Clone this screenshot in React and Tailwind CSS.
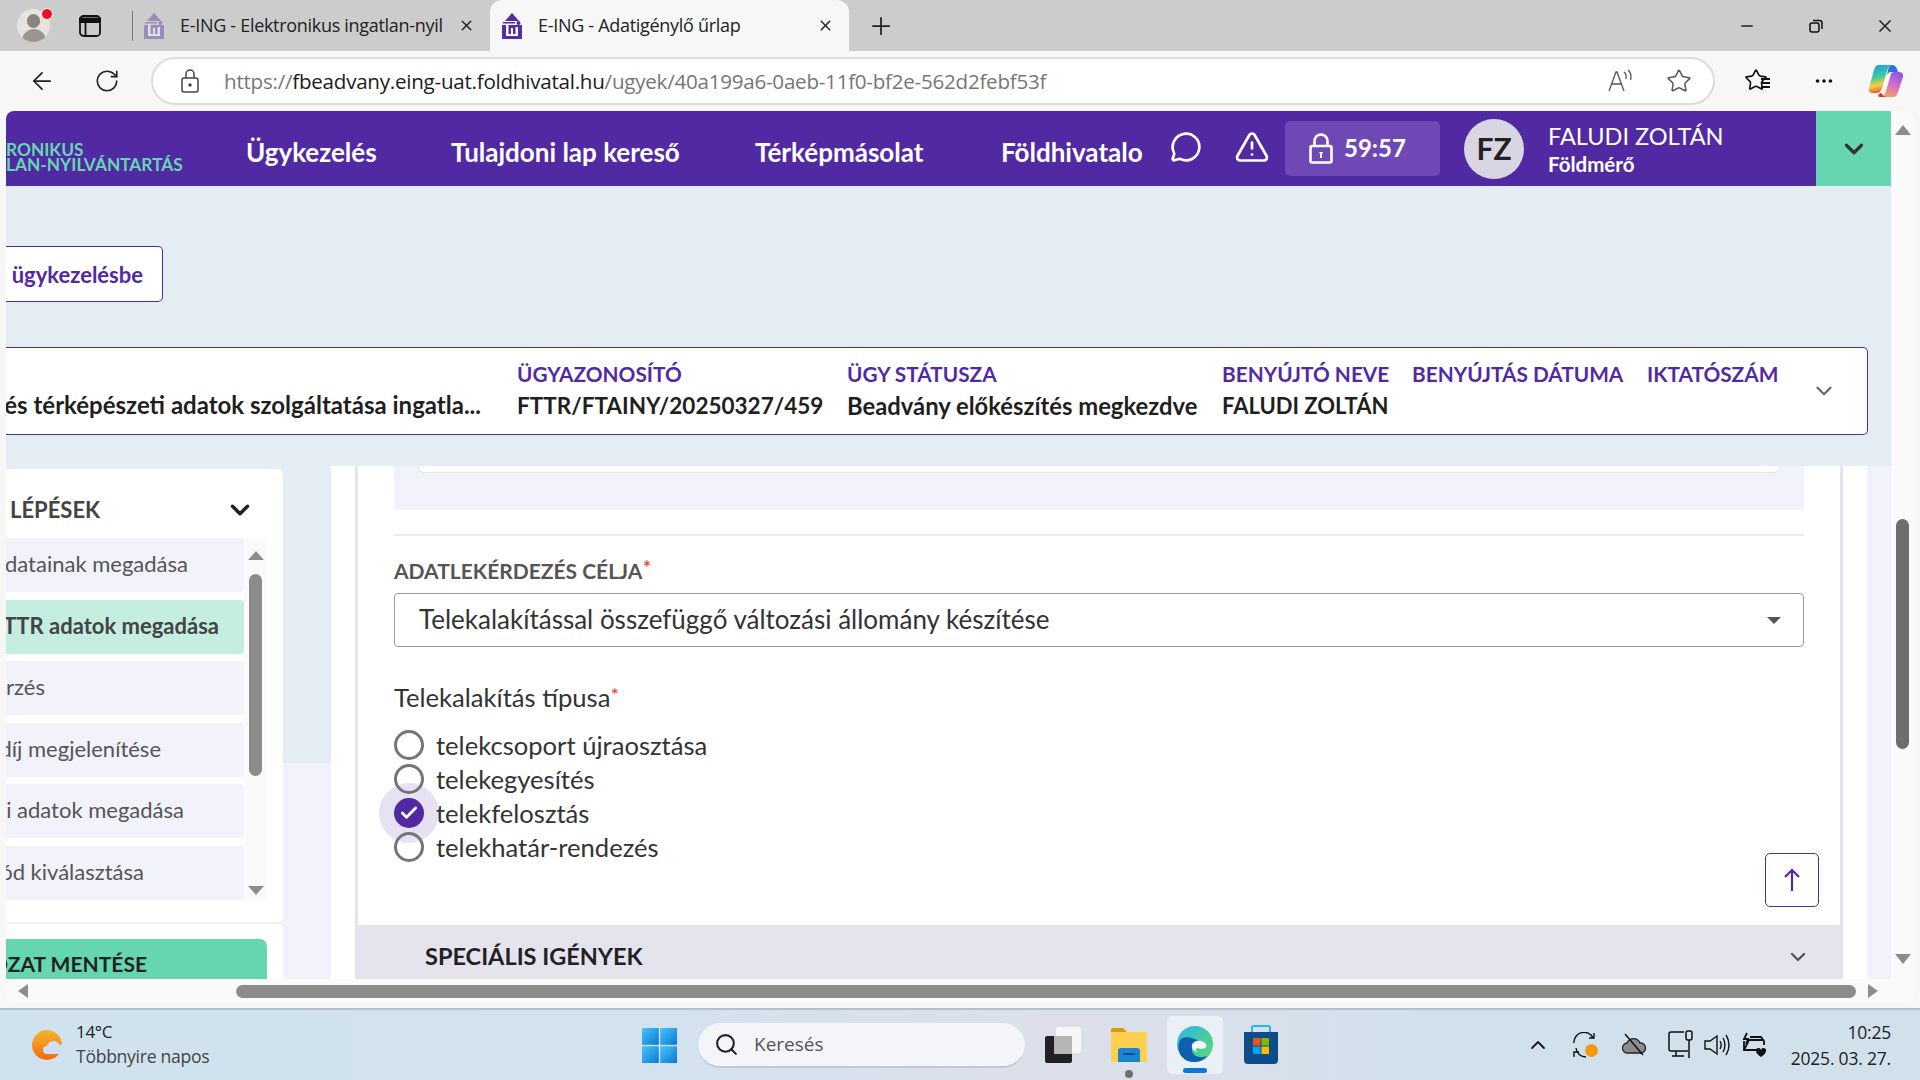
import React from "react";
import {
  ArrowLeft,
  Check,
  ChevronDown,
  ChevronUp,
  Ellipsis,
  MessageCircle,
  Minus,
  Plus,
  RotateCw,
  Search,
  Star,
  TriangleAlert,
  X,
} from "lucide-react";

const steps = [
  { text: "datainak megadása", pr: "pr-[56px]" },
  { text: "TTR adatok megadása", pr: "pr-[25px]", active: true },
  { text: "rzés", pr: "pr-[199px]" },
  { text: "díj megjelenítése", pr: "pr-[83px]" },
  { text: "i adatok megadása", pr: "pr-[60px]" },
  { text: "ód kiválasztása", pr: "pr-[100px]" },
];

const radios = ["telekcsoport újraosztása", "telekegyesítés", "telekfelosztás", "telekhatár-rendezés"];

function Favicon({ faded }) {
  return (
    <svg width="22" height="26" viewBox="0 0 22 26" className={faded ? "opacity-40" : ""}>
      <path d="M11 0 L18 8 L4 8 Z M2 9 H14 V10.500 H2 Z" fill="#512da8" />
      <circle cx="17.500" cy="10" r="2" fill="#512da8" />
      <path d="M1 12 H21 V26 H1 Z" fill="#512da8" />
      <path d="M5 12 H7.500 V21 H10 V15 H12 V21 H14.500 V14 H17 V23 H5 Z" fill="#fff" />
    </svg>
  );
}

function Profile() {
  return (
    <div className="relative w-[33px] h-[33px] rounded-full bg-[#e6e3df] overflow-hidden shrink-0">
      <div className="mx-auto mt-[5px] w-[13px] h-[14px] rounded-full bg-[#8a8580]" />
      <div className="mx-auto mt-[1px] w-[24px] h-[14px] rounded-t-full bg-[#9a9590]" />
    </div>
  );
}

function TabBar() {
  return (
    <div className="h-[51px] bg-[#cccccc] flex items-end shrink-0 text-[#222]">
      <div className="w-[133px] h-[51px] flex items-center pl-[17px] relative">
        <Profile />
        <span className="absolute left-[41px] top-[8px] w-[12px] h-[12px] rounded-full bg-[#e81123] border border-white" />
        <svg width="22" height="22" viewBox="0 0 22 22" className="ml-[29px]" fill="none" stroke="#111" strokeWidth="1.800">
          <rect x="1" y="1" width="20" height="20" rx="3.500" />
          <path d="M1 3.500h20V7H1z" fill="#111" />
          <path d="M6.500 7v14" />
        </svg>
        <div className="absolute right-0 top-[11px] h-[30px] w-px bg-[#777]" />
      </div>
      <div className="w-[357px] h-[51px] flex items-center pl-[10px] pr-[10px]">
        <Favicon faded />
        <span className="ml-[15px] w-[263px] overflow-hidden whitespace-nowrap text-[18px] font-['Open_Sans',sans-serif] tracking-[-0.3px]">
          E-ING - Elektronikus ingatlan-nyilvántartás
        </span>
        <X size={17} className="ml-[15px]" />
      </div>
      <div className="w-[359px] h-[51px] bg-[#f7f7f7] rounded-t-[12px] flex items-center pl-[11px]">
        <Favicon />
        <span className="ml-[15px] w-[279px] whitespace-nowrap text-[18px] font-['Open_Sans',sans-serif] tracking-[-0.3px]">
          E-ING - Adatigénylő űrlap
        </span>
        <X size={17} />
      </div>
      <div className="h-[51px] flex items-center ml-[18px]">
        <Plus size={28} strokeWidth={1.5} />
      </div>
      <div className="ml-auto h-[51px] flex items-center">
        <div className="w-[70px] flex justify-center"><Minus size={18} /></div>
        <div className="w-[68px] flex justify-center">
          <svg width="16" height="16" viewBox="0 0 16 16" fill="none" stroke="#111" strokeWidth="1.500">
            <rect x="2" y="5" width="9" height="9" rx="2" />
            <path d="M5 2.500h6.500a2.500 2.500 0 0 1 2.500 2.500v6" />
          </svg>
        </div>
        <div className="w-[70px] flex justify-center"><X size={20} /></div>
      </div>
    </div>
  );
}

function CopilotIcon() {
  return (
    <svg width="36" height="34" viewBox="0 0 36 34">
      <defs>
        <linearGradient id="cpA" x1="0.1" y1="0" x2="0.3" y2="1">
          <stop offset="0" stopColor="#1f9ee8" />
          <stop offset="0.45" stopColor="#3fc9a0" />
          <stop offset="0.75" stopColor="#f4d03a" />
          <stop offset="1" stopColor="#ee5d38" />
        </linearGradient>
        <linearGradient id="cpB" x1="0.7" y1="0" x2="0.3" y2="1">
          <stop offset="0" stopColor="#8a5ae8" />
          <stop offset="0.5" stopColor="#d66cc8" />
          <stop offset="1" stopColor="#f8a05a" />
        </linearGradient>
      </defs>
      <path d="M11 1h13c-3 1-4 3-5 6l-5 17c-1 3-3 5-5 5H5c-3 0-5-2-4-5L6 6c1-3 2-5 5-5z" fill="url(#cpA)" />
      <path d="M24 1c2 0 4 1 5 4l1 3h-7c-2 0-3 1-4 3l1-5c1-3 2-5 4-5z" fill="#2f6fe0" />
      <path d="M25 33H13c3-1 4-3 5-6l5-17c1-2 2-2 4-2h3c3 0 6 1 5 5l-5 15c-1 3-2 5-5 5z" fill="url(#cpB)" />
      <path d="M13 29h-1l-2 3c1 1 2 1 3 1h5c-2-1-4-2-5-4z" fill="#d8342a" />
    </svg>
  );
}

function AddressBar() {
  return (
    <div className="h-[60px] bg-[#f7f7f7] flex items-center shrink-0 text-[#222]">
      <div className="w-[151px] flex items-center shrink-0">
        <ArrowLeft size={28} strokeWidth={1.5} className="ml-[28px]" />
        <RotateCw size={26} strokeWidth={1.5} className="ml-[38px]" />
      </div>
      <div className="w-[1564px] h-[48px] shrink-0 rounded-full bg-white border-2 border-[#dcdcdc] flex items-center pl-[27px]">
        <svg width="20" height="26" viewBox="0 0 20 26" fill="none" stroke="#444" strokeWidth="1.500">
          <rect x="2" y="10" width="16" height="14" rx="2" />
          <path d="M6 10V6a4 4 0 0 1 8 0v4" />
          <circle cx="10" cy="17" r="1" fill="#444" />
        </svg>
        <div className="ml-[24px] pt-[1px] text-[20.6px] font-['Open_Sans',sans-serif] tracking-[-0.25px] whitespace-nowrap text-[#767676]">
          https://<span className="text-[#1b1b1b]">fbeadvany.eing-uat.foldhivatal.hu</span>/ugyek/40a199a6-0aeb-11f0-bf2e-562d2febf53f
        </div>
        <div className="ml-auto flex items-center text-[#555]">
          <svg width="26" height="24" viewBox="0 0 26 24" fill="none" stroke="#555" strokeWidth="1.300">
            <path d="M2 22L9 3h1l7 19M5 15h10" />
            <path d="M17 3c2 1.500 2.500 4 2 7M21 1c3 2.500 3.500 6 2.500 10" />
          </svg>
          <Star size={26} strokeWidth={1.4} className="ml-[33px] mr-[21px]" />
        </div>
      </div>
      <div className="flex items-center text-[#111]">
        <div className="relative ml-[29px] w-[26px] h-[26px]">
          <Star size={24} strokeWidth={1.6} />
          <span className="absolute right-0 top-[10px] w-[9px] h-[2px] bg-[#111] shadow-[0_4px_0_#111,0_8px_0_#111]" />
        </div>
        <Ellipsis size={22} className="ml-[43px]" />
        <div className="ml-[33px]"><CopilotIcon /></div>
      </div>
    </div>
  );
}

function AppHeader() {
  return (
    <div className="h-[75px] bg-[#512aa3] flex items-center shrink-0 text-white">
      <div className="w-[240px] h-full flex flex-col justify-center overflow-hidden shrink-0 pt-[16px] text-[#66d6b0] font-bold text-[17.300px] leading-[15px] whitespace-nowrap">
        <span>RONIKUS</span>
        <span>LAN-NYILVÁNTARTÁS</span>
      </div>
      <div className="w-[205px] shrink-0 font-bold text-[26px] pt-[7px]">Ügykezelés</div>
      <div className="w-[304px] shrink-0 font-bold text-[26px] pt-[7px]">Tulajdoni lap kereső</div>
      <div className="w-[246px] shrink-0 font-bold text-[26px] pt-[7px]">Térképmásolat</div>
      <div className="w-[169px] shrink-0 font-bold text-[26px] pt-[7px] whitespace-nowrap overflow-hidden">Földhivatalo</div>
      <MessageCircle size={32} strokeWidth={2} className="shrink-0 mb-[4px]" />
      <TriangleAlert size={36} strokeWidth={1.8} className="shrink-0 ml-[32px] mb-[4px]" />
      <div className="ml-[15px] w-[155px] h-[55px] rounded-[5px] bg-[#6e49b5] flex items-center pl-[24px] shrink-0">
        <svg width="24" height="31" viewBox="0 0 24 31" fill="none" stroke="#fff" strokeWidth="2.600">
          <rect x="1.500" y="13" width="21" height="16.500" rx="1.500" />
          <path d="M5.500 13V8a6.500 6.500 0 0 1 13 0v5" />
          <path d="M10 19h4l-1 2v4h-2v-4z" fill="#fff" stroke="none" />
        </svg>
        <span className="ml-[11px] text-[24px] font-bold leading-none mb-[2px]">59:57</span>
      </div>
      <div className="ml-[24px] w-[60px] h-[60px] rounded-full bg-[#d9d6e4] flex items-center justify-center text-[#222] font-bold text-[30px] shrink-0">
        FZ
      </div>
      <div className="ml-[24px] w-[268px] shrink-0">
        <div className="text-[23.500px] leading-[30px] font-normal">FALUDI ZOLTÁN</div>
        <div className="text-[20.500px] leading-[26px] font-bold">Földmérő</div>
      </div>
      <div className="w-[75px] h-full bg-[#66d6b0] flex items-center justify-center shrink-0">
        <ChevronDown size={30} strokeWidth={2.6} className="text-[#333]" />
      </div>
    </div>
  );
}

function InfoCol({ label, value, className, valueSize }) {
  return (
    <div className={`shrink-0 ${className}`}>
      <div className="text-[#512aa3] font-bold text-[20.800px] leading-[26px] mb-[3px] whitespace-nowrap">{label}</div>
      <div className={`text-[#1f1f1f] font-bold leading-[32px] whitespace-nowrap h-[32px] ${valueSize}`}>{value}</div>
    </div>
  );
}

function StickyArea() {
  return (
    <div className="h-[280px] bg-[#e3edf3] shrink-0">
      <div className="pt-[60px]">
        <div className="w-[157px] h-[56px] bg-white border border-l-0 border-[#512aa3] rounded-r-[5px] flex items-center justify-end pr-[19px] overflow-hidden">
          <span className="text-[#512aa3] font-bold text-[22px] whitespace-nowrap">ügykezelésbe</span>
        </div>
      </div>
      <div className="mt-[45px] w-[1862px] h-[88px] bg-white border border-l-0 border-[#512aa3] rounded-r-[5px] flex items-center">
        <div className="w-[476px] pr-[1px] flex justify-end overflow-hidden shrink-0 pt-[27px]">
          <span className="text-[#1f1f1f] font-bold text-[24px] leading-[32px] whitespace-nowrap">és térképészeti adatok szolgáltatása ingatla...</span>
        </div>
        <div className="w-[35px] shrink-0" />
        <InfoCol label="ÜGYAZONOSÍTÓ" value="FTTR/FTAINY/20250327/459" className="w-[330px]" valueSize="text-[22.500px]" />
        <InfoCol label="ÜGY STÁTUSZA" value="Beadvány előkészítés megkezdve" className="w-[375px]" valueSize="text-[23.800px]" />
        <InfoCol label="BENYÚJTÓ NEVE" value="FALUDI ZOLTÁN" className="w-[190px]" valueSize="text-[22px]" />
        <InfoCol label="BENYÚJTÁS DÁTUMA" value="" className="w-[235px]" valueSize="text-[22px]" />
        <InfoCol label="IKTATÓSZÁM" value="" className="w-[165px]" valueSize="text-[22px]" />
        <ChevronDown size={26} strokeWidth={2} className="text-[#666] shrink-0 -ml-[1px]" />
      </div>
    </div>
  );
}

function Sidebar() {
  return (
    <div className="w-[325px] shrink-0 bg-[linear-gradient(#e3edf3_297px,#f1f2fa_297px)] pt-[3px] overflow-hidden">
      <div className="w-[277px] h-[453px] bg-white rounded-r-[5px]">
        <div className="h-[69px] flex items-center pt-[12px] pl-[4px]">
          <span className="text-[#444] font-bold text-[22px]">LÉPÉSEK</span>
          <ChevronDown size={30} strokeWidth={2.8} className="ml-[125px] text-[#222]" />
        </div>
        <div className="flex">
          <div className="w-[238px] flex flex-col gap-[7.600px] shrink-0">
            {steps.map((s) => (
              <div
                key={s.text}
                className={`h-[54px] rounded-r-[3px] flex items-center justify-end overflow-hidden whitespace-nowrap text-[22px] pb-[3px] ${s.pr} ${
                  s.active ? "bg-[#c3eee0] font-bold text-[#444]" : "bg-[#f1f2fa] text-[#555]"
                }`}
              >
                {s.text}
              </div>
            ))}
          </div>
          <div className="w-[23px] h-[362px] bg-[#fafafa] flex flex-col items-center pt-[13px] shrink-0">
            <div className="w-0 h-0 border-x-[8px] border-x-transparent border-b-[9px] border-b-[#8c8c8c]" />
            <div className="w-[13px] h-[202px] rounded-full bg-[#8c8c8c] mt-[14px]" />
            <div className="w-0 h-0 border-x-[8px] border-x-transparent border-t-[9px] border-t-[#8c8c8c] mt-[110px]" />
          </div>
        </div>
      </div>
      <div className="w-[277px] h-[60px] mt-[2px] bg-white rounded-r-[5px] pt-[15px]">
        <div className="w-[261px] h-[45px] bg-[#66d6b0] rounded-tr-[7px] flex items-center justify-end pr-[120px] pt-[4px] overflow-hidden whitespace-nowrap">
          <span className="text-[#222] font-bold text-[21px]">OZAT MENTÉSE</span>
        </div>
      </div>
    </div>
  );
}

function Radio({ label, checked }) {
  return (
    <div className="flex items-center h-[34px]">
      <div className="relative w-[30px] h-[30px] shrink-0">
        {checked && <div className="absolute -left-[15px] -top-[15px] w-[60px] h-[60px] rounded-full bg-[#e7e2f3]" />}
        {checked ? (
          <div className="absolute inset-0 z-10 rounded-full bg-[#512aa3] flex items-center justify-center">
            <Check size={20} strokeWidth={3.4} className="text-white" />
          </div>
        ) : (
          <div className="absolute inset-0 z-10 rounded-full border-[3px] border-[#757575]" />
        )}
      </div>
      <span className="relative z-10 ml-[12px] text-[25.600px] text-[#333] whitespace-nowrap">{label}</span>
    </div>
  );
}

function FormPanel() {
  return (
    <div className="flex-1 flex bg-white min-w-0">
      <div className="w-[24px] shrink-0" />
      <div className="w-[1488px] shrink-0 flex flex-col">
        <div className="relative flex-1 border-x-[3px] border-[#e5e3ee] px-[36px]">
          <div className="h-[44px] bg-[#f1f2fa]">
            <div className="mx-[24px] h-[7px] bg-white rounded-b-[6px] border-b border-x border-[#e4e4ea]" />
          </div>
          <div className="mt-[24px] h-[2px] bg-[#ebebeb]" />
          <div className="mt-[18px] mb-[5px] h-[34px] flex items-center text-[21px] font-bold text-[#555]">
            ADATLEKÉRDEZÉS CÉLJA<span className="text-[#e53935] font-normal -mt-[6px]">*</span>
          </div>
          <div className="h-[54px] border border-[#9a97a8] rounded-[4px] flex items-center pl-[24px] pr-[22px]">
            <span className="text-[26px] text-[#333] whitespace-nowrap pb-[2px]">Telekalakítással összefüggő változási állomány készítése</span>
            <div className="ml-auto w-0 h-0 border-x-[7px] border-x-transparent border-t-[7px] border-t-[#555]" />
          </div>
          <div className="mt-[33px] h-[34px] flex items-center text-[25.600px] text-[#333]">
            Telekalakítás típusa<span className="text-[#e53935] text-[20px] -mt-[6px]">*</span>
          </div>
          <div className="mt-[14px] flex flex-col">
            {radios.map((r) => (
              <Radio key={r} label={r} checked={r === "telekfelosztás"} />
            ))}
          </div>
          <button className="absolute right-[21px] bottom-[18px] w-[54px] h-[54px] bg-white border border-[#512aa3] rounded-[5px] flex items-center justify-center">
            <svg width="18" height="24" viewBox="0 0 18 24" fill="none" stroke="#512aa3" strokeWidth="2.200">
              <path d="M9 23V2M2 9l7-7 7 7" />
            </svg>
          </button>
        </div>
        <div className="h-[54px] bg-[#e5e3ee] flex items-center pl-[70px] pr-[33px] pt-[10px] shrink-0">
          <span className="font-bold text-[23.500px] text-[#222]">SPECIÁLIS IGÉNYEK</span>
          <ChevronDown size={24} strokeWidth={2.4} className="ml-auto text-[#555]" />
        </div>
      </div>
      <div className="w-[24px] shrink-0" />
      <div className="flex-1 bg-[#f1f2fa]" />
    </div>
  );
}

function VScrollbar() {
  return (
    <div className="w-[23px] shrink-0 bg-[#fafafa] flex flex-col items-center pt-[14px] rounded-tr-[8px]">
      <div className="w-0 h-0 border-x-[8px] border-x-transparent border-b-[10px] border-b-[#8c8c8c]" />
      <div className="w-[13px] h-[230px] rounded-full bg-[#6e6e6e] mt-[384px]" />
      <div className="w-0 h-0 border-x-[8px] border-x-transparent border-t-[10px] border-t-[#8c8c8c] mt-[205px]" />
    </div>
  );
}

function HScrollbar() {
  return (
    <div className="h-[24px] bg-[#fafafa] rounded-b-[8px] flex items-center shrink-0">
      <div className="ml-[12px] w-0 h-0 border-y-[7px] border-y-transparent border-r-[10px] border-r-[#8c8c8c]" />
      <div className="ml-[208px] w-[1620px] h-[13px] rounded-full bg-[#8c8c8c]" />
      <div className="ml-[12px] w-0 h-0 border-y-[7px] border-y-transparent border-l-[10px] border-l-[#8c8c8c]" />
    </div>
  );
}

function WeatherIcon() {
  return (
    <svg width="36" height="36" viewBox="0 0 36 36">
      <defs>
        <linearGradient id="wxA" x1="0" y1="0" x2="0" y2="1">
          <stop offset="0" stopColor="#f5b62e" />
          <stop offset="1" stopColor="#f26a10" />
        </linearGradient>
      </defs>
      <circle cx="15" cy="18" r="15" fill="url(#wxA)" />
      <path d="M15 27a4 4 0 0 1 0-8 6.500 6.500 0 0 1 12-1.500 4.800 4.800 0 0 1 2 9.500z" fill="#cfe0f5" />
    </svg>
  );
}

function WindowsLogo() {
  return (
    <svg width="35" height="35" viewBox="0 0 35 35">
      <defs>
        <linearGradient id="winA" x1="0" y1="0" x2="1" y2="1">
          <stop offset="0" stopColor="#48c6f8" />
          <stop offset="1" stopColor="#0a78d4" />
        </linearGradient>
      </defs>
      <rect x="0" y="0" width="16.800" height="16.800" fill="url(#winA)" />
      <rect x="18.200" y="0" width="16.800" height="16.800" fill="url(#winA)" />
      <rect x="0" y="18.200" width="16.800" height="16.800" fill="url(#winA)" />
      <rect x="18.200" y="18.200" width="16.800" height="16.800" fill="url(#winA)" />
    </svg>
  );
}

function EdgeIcon() {
  return (
    <svg width="36" height="38" viewBox="0 0 36 38">
      <defs>
        <linearGradient id="edA" x1="0" y1="0" x2="1" y2="1">
          <stop offset="0" stopColor="#2bb6e6" />
          <stop offset="1" stopColor="#5fdc6c" />
        </linearGradient>
      </defs>
      <circle cx="18" cy="19" r="18" fill="url(#edA)" />
      <path d="M3 15c-5 12 3 22 14 22 6 0 11-3 13-6-8 3-16 0-15-8 0-5 4-7 7-7-5-3-15-6-19-1z" fill="#0f5fb0" />
      <path d="M15 20c1-4 8-6 13-2 3 3 1 6-4 6l-4-1c-2 1-1 3 1 4-3 0-7-3-6-7z" fill="#f4f7fb" />
    </svg>
  );
}

function FolderIcon() {
  return (
    <svg width="38" height="36" viewBox="0 0 38 36">
      <path d="M1 3a2 2 0 0 1 2-2h10l4 4H1z" fill="#d89b0c" />
      <rect x="1" y="5" width="36" height="30" rx="1" fill="#fdd04f" />
      <path d="M8 24a3 3 0 0 1 3-3h16a3 3 0 0 1 3 3v11H8z" fill="#1a84d0" />
      <rect x="13" y="26" width="12" height="2" fill="#0b4f8e" />
    </svg>
  );
}

function StoreIcon() {
  return (
    <svg width="36" height="40" viewBox="0 0 36 40">
      <path d="M9 8V3a2 2 0 0 1 2-2h14a2 2 0 0 1 2 2v5" stroke="#28b4f0" strokeWidth="2" fill="none" />
      <path d="M1 7h34v28a4 4 0 0 1-4 4H5a4 4 0 0 1-4-4z" fill="#0f4c8a" />
      <rect x="10" y="13" width="7.500" height="7.500" fill="#f25022" />
      <rect x="18.500" y="13" width="7.500" height="7.500" fill="#7fba00" />
      <rect x="10" y="21.500" width="7.500" height="7.500" fill="#00a4ef" />
      <rect x="18.500" y="21.500" width="7.500" height="7.500" fill="#ffb900" />
    </svg>
  );
}

function Tray() {
  return (
    <div className="flex items-center text-[#1a1a1a]">
      <ChevronUp size={24} strokeWidth={1.8} />
      <div className="relative ml-[23px]">
        <svg width="26" height="26" viewBox="0 0 26 26" fill="none" stroke="#111" strokeWidth="1.400">
          <path d="M1 11A10 10 0 0 1 20 6M21 1v5h-5" />
          <path d="M3 16a10 10 0 0 0 10 9M1 25v-5h5" />
        </svg>
        <span className="absolute left-[12px] top-[12px] w-[13px] h-[13px] rounded-full bg-[#f59a0c]" />
      </div>
      <svg width="26" height="24" viewBox="0 0 26 24" className="ml-[22px]">
        <path d="M7 20a5 5 0 0 1-1-10 7 7 0 0 1 13 0 5 5 0 0 1 1 10z" fill="#8d8d8d" stroke="#222" strokeWidth="1.300" />
        <path d="M4 1l18 21" fill="none" stroke="#111" strokeWidth="1.500" />
      </svg>
      <svg width="26" height="30" viewBox="0 0 26 30" className="ml-[21px]" fill="none" stroke="#111" strokeWidth="1.500">
        <path d="M16 2H3a2 2 0 0 0-2 2v15a2 2 0 0 0 2 2h17M8 21v5M4 26h12" />
        <rect x="18" y="1" width="6" height="9" rx="2" />
        <path d="M21 10v18" />
      </svg>
      <svg width="26" height="24" viewBox="0 0 26 24" className="ml-[10px]" fill="none" stroke="#111" strokeWidth="1.400">
        <path d="M1 8h5l7-5v18l-7-5H1z" />
        <path d="M16 8c1.500 2.500 1.500 5.500 0 8M19 5c2.500 4 2.500 10 0 14M22 2c4 6 4 14 0 20" />
      </svg>
      <svg width="28" height="26" viewBox="0 0 28 26" className="ml-[11px]" fill="none" stroke="#111" strokeWidth="1.800">
        <path d="M6 1L3 7h4l-2 5" />
        <path d="M3 9v9h14M9 5h11l3 4v4" />
        <path d="M3 18l5-10h14" />
        <path d="M20 25c-3-2-5-4-5-6a2.500 2.500 0 0 1 5-1 2.500 2.500 0 0 1 5 1c0 2-2 4-5 6z" fill="#111" stroke="none" />
      </svg>
    </div>
  );
}

function Taskbar() {
  return (
    <div className="h-[72px] border-t-2 border-[#b3c0ca] bg-[linear-gradient(90deg,#cfe2ee,#d3e2ef_35%,#dcdfea_55%,#dadfea_62%,#d0e1ec_75%)] flex items-center shrink-0 font-['Open_Sans',sans-serif]">
      <div className="w-[642px] flex items-center pl-[32px] shrink-0">
        <WeatherIcon />
        <div className="ml-[8px] leading-[25px] -mt-[2px]">
          <div className="text-[17px] text-[#222] tracking-[-0.3px]">14°C</div>
          <div className="text-[17.600px] text-[#444] tracking-[-0.3px]">Többnyire napos</div>
        </div>
      </div>
      <WindowsLogo />
      <div className="ml-[21px] w-[327px] h-[45px] rounded-full bg-[#f3f5f9] border-b-2 border-[#c0c6cc] flex items-center pl-[16px] shrink-0">
        <Search size={25} strokeWidth={2} className="text-[#222]" />
        <span className="ml-[15px] text-[19px] text-[#555]">Keresés</span>
      </div>
      <div className="ml-[20px] w-[36px] h-[36px] relative shrink-0">
        <div className="absolute right-0 top-0 w-[25px] h-[26px] bg-[#f6f6f6] rounded-[2px]" />
        <div className="absolute left-0 top-[9px] w-[27px] h-[27px] bg-[#222] rounded-[2px]" />
        <div className="absolute left-[9px] top-[9px] w-[18px] h-[18px] bg-[#b5b5b5]" />
      </div>
      <div className="ml-[29px] shrink-0 relative">
        <FolderIcon />
        <span className="absolute left-[15px] top-[43px] w-[8px] h-[8px] rounded-full bg-[#6d6f72]" />
      </div>
      <div className="ml-[19px] w-[56px] h-[58px] rounded-[5px] bg-[#eaf0f6] flex flex-col items-center pt-[9px] shrink-0 relative">
        <EdgeIcon />
        <span className="absolute bottom-[1px] w-[24px] h-[5px] rounded-full bg-[#0a78d4]" />
      </div>
      <div className="ml-[20px] shrink-0"><StoreIcon /></div>
      <div className="ml-auto flex items-center pr-[29px]">
        <Tray />
        <div className="ml-[22px] text-right leading-[26px] text-[#222] text-[17.500px] tracking-[-0.2px] whitespace-nowrap">
          <div>10:25</div>
          <div>2025. 03. 27.</div>
        </div>
      </div>
    </div>
  );
}

export default function App() {
  return (
    <div className="w-[1920px] h-[1080px] flex flex-col overflow-hidden bg-[#f7f7f7] font-['Lato',sans-serif]">
      <TabBar />
      <AddressBar />
      <div className="h-[892px] ml-[6px] mr-[6px] flex flex-col shrink-0 rounded-[8px] overflow-hidden">
        <div className="h-[868px] flex shrink-0">
          <div className="w-[1885px] flex flex-col shrink-0 overflow-hidden">
            <AppHeader />
            <StickyArea />
            <div className="h-[513px] flex shrink-0 overflow-hidden">
              <Sidebar />
              <FormPanel />
            </div>
          </div>
          <VScrollbar />
        </div>
        <HScrollbar />
      </div>
      <div className="h-[5px] shrink-0" />
      <Taskbar />
    </div>
  );
}
